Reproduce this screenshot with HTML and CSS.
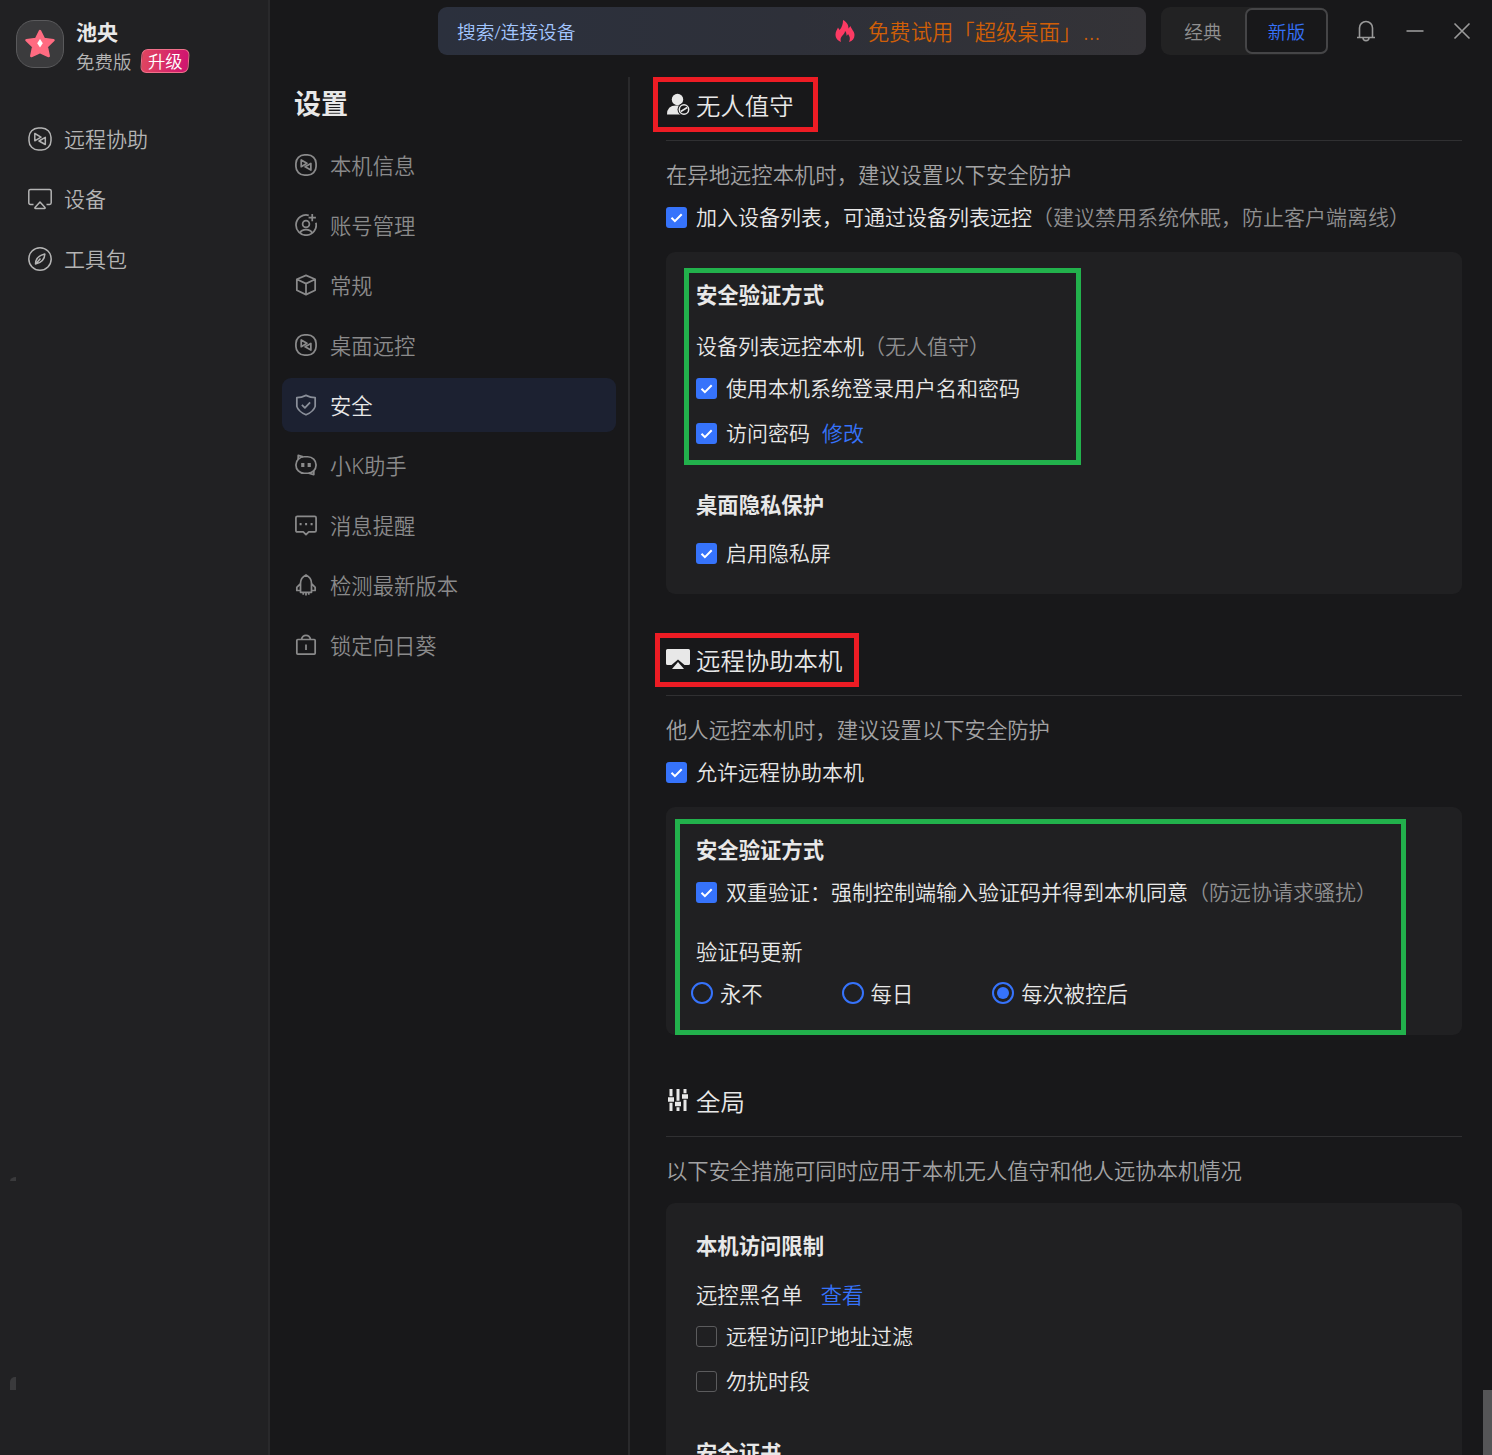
FILE: index.html
```
<!DOCTYPE html>
<html lang="zh-CN">
  <head>
    <meta charset="UTF-8" />
    <meta name="viewport" content="width=device-width, initial-scale=1.0" />
    <link rel="stylesheet" href="styles.css">
    <title>设置</title>
  </head>
  <body>
    <!-- shared icon shapes -->
    <svg class="defs" width="0" height="0">
      <symbol id="remote" viewBox="0 0 24 24">
        <rect x="1" y="1" width="22" height="22" rx="9.300" />
        <path d="M6.800 6.500v7.300l6.200-3.600ZM17.300 10.300v7.200L11 14Z" />
      </symbol>
      <symbol id="tick" viewBox="0 0 21 21">
        <path d="M5.500 10.800l3.400 3.400 6.800-7" />
      </symbol>
    </svg>

    <div class="app">
      <aside class="sidebar">
        <div class="profile">
          <div class="avatar">
            <svg width="32" height="32" viewBox="0 0 32 32">
              <path d="M16 3l4 8 9.500 1.200-6.700 6.500 1.900 9.300L16 24l-8.700 4 1.900-9.300-6.700-6.500L12 11Z" fill="#ff6b81" stroke="#ff6b81" stroke-width="2.500" stroke-linejoin="round" />
              <path d="M16 11l2.800 4.200L16 19.500l-2.800-4.300Z" fill="#fff" />
            </svg>
          </div>
          <div class="profile-info">
            <div class="user-name">池央</div>
            <div class="plan">免费版<span class="badge"><span>升级</span></span></div>
          </div>
        </div>
        <nav class="main-nav">
          <a class="main-link"><svg class="icon-lg"><use href="#remote" /></svg>远程协助</a>
          <a class="main-link">
            <svg class="icon-lg" viewBox="0 0 24 24"><path d="M5.500 17.500H2.500Q.8 17.500.8 15.800V4Q.8 2.500 2.500 2.500h19q1.700 0 1.700 1.500v11.800q0 1.700-1.700 1.700h-3M12 15l5 5.500q.5 1-.5 1h-9q-1 0-.5-1Z" /></svg>设备
          </a>
          <a class="main-link">
            <svg class="icon-lg" viewBox="0 0 24 24"><circle cx="12" cy="12" r="11.200" /><path d="M16.800 7c-6.300 1.500-9.300 4.500-9.300 10 6.300-1.500 9.300-4.500 9.300-10ZM12.500 11.500l-4.500 5" /></svg>工具包
          </a>
        </nav>
        <div class="tray tray-top"></div>
        <div class="tray tray-bottom"></div>
      </aside>

      <div class="main">
        <header class="topbar">
          <div class="search">
            <span class="search-text">搜索/连接设备</span>
            <svg width="20" height="22" viewBox="0 0 20 22"><path d="M6 22C2 20.500.500 17.500.500 14.500c0-3 1.500-4.500 2.500-7l1.500 2.500C7 7.500 8 4 8 0c4 2 5.500 5 5.500 8.500L15.500 6c.5 3 4 5 4 9 0 3.500-2 6-5.500 7 1.500-3 1-5.500-1-8-.5 1.200-1 1.500-1.500 1.800.2-2.300-.5-4-1.500-4.800 0 4-6 5-4 11Z" fill="#fc3a63" /></svg>
            <span class="promo">免费试用「超级桌面」<span class="dots">...</span></span>
          </div>
          <div class="toggle">
            <span class="toggle-item">经典</span>
            <span class="toggle-item active">新版</span>
          </div>
          <div class="window-btns">
            <svg width="20" height="22" viewBox="0 0 20 22"><path d="M1 17.500h18M3.500 17.500V8a6.500 6.500 0 0 1 13 0v9.500M7 18c.3 3.500 5.700 3.500 6 0" /></svg>
            <svg width="18" height="18" viewBox="0 0 18 18"><path d="M.5 9h17" /></svg>
            <svg width="18" height="18" viewBox="0 0 18 18"><path d="M1.500 1.500l15 15M16.500 1.500l-15 15" /></svg>
          </div>
        </header>

        <div class="columns">
          <nav class="settings-nav">
            <h1>设置</h1>
            <a class="item"><svg class="icon"><use href="#remote" /></svg>本机信息</a>
            <a class="item">
              <svg class="icon" viewBox="0 0 24 24"><path d="M15 1.500A11 11 0 1 0 22.800 9.500M18.800 0v8M14.800 4h8M5.500 20.500c2-4.500 11-4.500 13 0" /><circle cx="12" cy="11" r="3.700" /></svg>账号管理
            </a>
            <a class="item">
              <svg class="icon" viewBox="0 0 24 24"><path d="M12 1.500l10 4.200v12L12 22.500l-10-4.800v-12ZM2 5.700l10 4.800 10-4.800M12 10.500v12" /></svg>常规
            </a>
            <a class="item"><svg class="icon"><use href="#remote" /></svg>桌面远控</a>
            <a class="item selected">
              <svg class="icon" viewBox="0 0 24 24"><path d="M12 1.500Q17 4 22 4v9.500Q20.500 19 12 22.700 3.500 19 2 13.500V4q5 0 10-2.500ZM7.500 11.800l3.300 3.300 5.700-5.900" /></svg>安全
            </a>
            <a class="item">
              <svg class="icon" viewBox="0 0 24 24"><rect x="1" y="3" width="22" height="18" rx="9" /><path d="M3.500 6V1.500L9 3M15 21l5.500 1.500V18" /><path d="M8.500 9.800v4.400M15.500 9.800v4.400" stroke-width="3.500" /></svg>小K助手
            </a>
            <a class="item">
              <svg class="icon" viewBox="0 0 24 24"><path d="M2.500 2.500h19q1.500 0 1.500 1.500v14q0 1.500-1.500 1.500h-6.500l-3 3-3-3H2.500Q1 19.500 1 18V4q0-1.500 1.500-1.500Z" /><path d="M5 11h2.200M11 11h2.200M17 11h2.200" stroke-width="2.500" /></svg>消息提醒
            </a>
            <a class="item">
              <svg class="icon" viewBox="0 0 24 24"><path d="M6 20h12V10q0-6-6-9-6 3-6 9ZM6 10.500l-4 4V18h4M18 10.500l4 4V18h-4M9 20.500v2M12 20.500v3M15 20.500v2" /></svg>检测最新版本
            </a>
            <a class="item">
              <svg class="icon" viewBox="0 0 24 24"><path d="M3 6h18q1 0 1 1v14q0 1-1 1H3q-1 0-1-1V7q0-1 1-1ZM7 6q1-4.500 5-4.500T17 6M12 11.500v6" /></svg>锁定向日葵
            </a>
          </nav>

          <main class="content">
            <section class="section">
              <div class="section-title">
                <svg width="24" height="24" viewBox="0 0 24 24"><circle cx="11.500" cy="6.500" r="5.700" fill="#e8e8e8" /><path d="M1 21.500q0-9 9-9h7v9Z" fill="#e8e8e8" /><circle cx="18" cy="16.500" r="6.500" fill="#18181a" /><circle cx="18" cy="16.500" r="4.700" fill="none" stroke="#e8e8e8" stroke-width="1.500" /><path d="M14.800 18.500l6.400-4" stroke="#e8e8e8" stroke-width="1.500" /></svg>
                <h2>无人值守</h2>
                <div class="mark mark-red-1"></div>
              </div>
              <p class="desc">在异地远控本机时，建议设置以下安全防护</p>
              <label class="row"><svg class="check on"><use href="#tick" /></svg>加入设备列表，可通过设备列表远控<span class="hint">（建议禁用系统休眠，防止客户端离线）</span></label>
              <div class="card">
                <h3>安全验证方式</h3>
                <div class="row gap-9">设备列表远控本机<span class="hint">（无人值守）</span></div>
                <label class="row"><svg class="check on"><use href="#tick" /></svg>使用本机系统登录用户名和密码</label>
                <label class="row gap-3"><svg class="check on"><use href="#tick" /></svg>访问密码<a class="link">修改</a></label>
                <h3 class="gap-30">桌面隐私保护</h3>
                <label class="row gap-6"><svg class="check on"><use href="#tick" /></svg>启用隐私屏</label>
                <div class="mark mark-green-1"></div>
              </div>
            </section>

            <section class="section">
              <div class="section-title">
                <svg width="24" height="24" viewBox="0 0 24 24"><path d="M1.500 1h21q1.500 0 1.500 1.500v13q0 1.500-1.500 1.500h-4L12 11.500 5.500 17h-4Q0 17 0 15.500v-13Q0 1 1.500 1Z" fill="#e8e8e8" /><path d="M12 14l6 7H6Z" fill="#e8e8e8" /></svg>
                <h2>远程协助本机</h2>
                <div class="mark mark-red-2"></div>
              </div>
              <p class="desc">他人远控本机时，建议设置以下安全防护</p>
              <label class="row"><svg class="check on"><use href="#tick" /></svg>允许远程协助本机</label>
              <div class="card card-remote">
                <h3>安全验证方式</h3>
                <label class="row"><svg class="check on"><use href="#tick" /></svg>双重验证：强制控制端输入验证码并得到本机同意<span class="hint">（防远协请求骚扰）</span></label>
                <div class="row sub gap-17">验证码更新</div>
                <div class="radios">
                  <label class="radio"><span class="dot"></span>永不</label>
                  <label class="radio"><span class="dot"></span>每日</label>
                  <label class="radio"><span class="dot on"></span>每次被控后</label>
                </div>
                <div class="mark mark-green-2"></div>
              </div>
            </section>

            <section class="section">
              <div class="section-title">
                <svg width="24" height="24" viewBox="0 0 24 24" stroke="#e8e8e8"><path d="M5 0v22M12 0v22M19 0v22" stroke-width="3" /><path d="M1 10.500h8M8 15h8M15 7.500h8" stroke="#18181a" stroke-width="6.500" /><path d="M2 10.500h6M9 15h6M16 7.500h6" stroke-width="4.500" /></svg>
                <h2>全局</h2>
              </div>
              <p class="desc">以下安全措施可同时应用于本机无人值守和他人远协本机情况</p>
              <div class="card card-global">
                <h3>本机访问限制</h3>
                <div class="row sub gap-6">远控黑名单<a class="link link-wide">查看</a></div>
                <label class="row"><span class="check"></span>远程访问IP地址过滤</label>
                <label class="row gap-3"><span class="check"></span>勿扰时段</label>
                <h3 class="gap-30">安全证书</h3>
              </div>
            </section>
          </main>
        </div>
      </div>
      <div class="scrollbar"></div>
    </div>
  </body>
</html>
```

FILE: styles.css
```
* {
  box-sizing: border-box;
}

body {
  margin: 0;
  background-color: #18181a;
  color: #e8e8e8;
  font-family: "Noto Sans", "Noto Sans CJK SC", sans-serif;
  font-size: 21px;
  font-weight: 350;
  overflow: hidden;
}

h1,
h2,
h3,
p {
  margin: 0;
}

svg {
  flex: none;
}

.defs {
  position: absolute;
}

.app {
  position: relative;
  display: flex;
  height: 1455px;
  overflow: hidden;
}

/* left sidebar */
.sidebar {
  position: relative;
  flex: none;
  width: 270px;
  padding: 20px 0 0 16px;
  background-color: #212123;
  border-right: 2px solid #29292b;
}

.profile {
  display: flex;
  gap: 12px;
  height: 89px;
}

.avatar {
  display: flex;
  align-items: center;
  justify-content: center;
  width: 48px;
  height: 48px;
  border: 1px solid #5a5a5c;
  border-radius: 18px;
  background-color: #3b3b3d;
}

.user-name {
  height: 26px;
  line-height: 25px;
  font-weight: 700;
}

.plan {
  display: flex;
  align-items: center;
  height: 30px;
  font-size: 18.5px;
  color: #b4b4b4;
}

.badge {
  display: flex;
  align-items: center;
  justify-content: center;
  width: 48px;
  height: 24px;
  margin-left: 9px;
  padding-bottom: 2px;
  border: 1px solid #f0708a;
  border-radius: 6px;
  background: linear-gradient(90deg, #e04560, #d01470);
  color: #fff;
  font-size: 17.300px;
  transform: skewX(-4deg);
}

.badge span {
  transform: skewX(4deg);
}

.main-link {
  display: flex;
  align-items: center;
  gap: 12px;
  height: 60px;
  padding: 0 0 2px 12px;
  color: #b4b4b4;
}

.icon-lg,
.icon,
.window-btns svg {
  fill: none;
  stroke: currentColor;
  stroke-linejoin: round;
}

.icon-lg {
  width: 24px;
  height: 24px;
  margin-top: 2px;
  stroke-width: 1.500px;
}

.tray {
  position: absolute;
  left: 10px;
  width: 6px;
  background-color: #3a3a3c;
}

.tray-top {
  top: 1177px;
  height: 4px;
  border-top-left-radius: 6px 4px;
}

.tray-bottom {
  top: 1377px;
  height: 13px;
  border-top-left-radius: 5px;
}

/* top bar */
.main {
  flex: 1;
  min-width: 0;
}

.topbar {
  display: flex;
  height: 77px;
  padding: 7px 0 0 168px;
}

.search {
  display: flex;
  align-items: center;
  width: 708px;
  height: 48px;
  padding: 0 46px 0 19px;
  border-radius: 9px;
  background: linear-gradient(90deg, #2b303d, #2e3039 50%, #343337);
}

.search-text {
  flex: 1;
  padding-bottom: 2px;
  font-size: 18.670px;
  color: #a3c6ff;
}

.promo {
  width: 232px;
  margin-left: 13px;
  padding-bottom: 2px;
  font-size: 21.330px;
  color: #d05f07;
  white-space: nowrap;
}

.dots {
  margin-left: 2px;
  letter-spacing: 0.500px;
}

.toggle {
  display: flex;
  align-items: center;
  width: 167px;
  height: 48px;
  margin-left: 15px;
  border-radius: 9px;
  background-color: #222223;
  font-size: 18.670px;
}

.toggle-item {
  display: flex;
  align-items: center;
  justify-content: center;
  width: 84px;
  height: 46px;
  padding-bottom: 2px;
  color: #909090;
}

.toggle-item.active {
  width: 83px;
  border: 2px solid #454547;
  border-radius: 7px;
  background-color: #18181a;
  color: #3672fa;
}

.window-btns {
  display: flex;
  align-items: center;
  gap: 29.500px;
  height: 48px;
  margin-left: 28px;
  color: #9a9a9a;
  stroke-width: 1.600px;
}

/* settings menu */
.columns {
  display: flex;
  height: 1378px;
}

.settings-nav {
  flex: none;
  width: 360px;
  padding: 0 12px;
  border-right: 2px solid #29292b;
}

h1 {
  height: 61px;
  padding-left: 12px;
  font-size: 27px;
  line-height: 54px;
}

.item {
  display: flex;
  align-items: center;
  gap: 13px;
  height: 54px;
  margin-bottom: 6px;
  padding: 0 0 2px 13px;
  border-radius: 9px;
  font-size: 21.330px;
  color: #8a8a8b;
}

.icon {
  width: 22px;
  height: 22px;
  margin-top: 2px;
  stroke-width: 1.900px;
}

.item.selected {
  background-color: #1c2131;
  color: #e8e8e8;
}

.selected .icon {
  color: #8a8f99;
}

/* content */
.content {
  flex: 1;
  margin-top: -7px;
  padding: 0 30px 0 36px;
}

.section {
  margin-bottom: 31px;
}

.section-title {
  position: relative;
  display: flex;
  align-items: center;
  gap: 6px;
  height: 71px;
  border-bottom: 1px solid #303032;
}

h2 {
  padding-bottom: 2px;
  font-size: 24.400px;
  font-weight: 350;
}

.desc {
  margin-top: 13px;
  font-size: 21.330px;
  line-height: 42px;
  color: #a3a3a4;
}

.row {
  display: flex;
  align-items: center;
  height: 42px;
  padding-bottom: 2px;
  white-space: nowrap;
}

.sub {
  font-size: 21.330px;
}

.hint {
  color: #8f8f90;
}

.check {
  width: 21px;
  height: 21px;
  margin: 2px 9px 0 0;
  border: 1px solid #5b5b5d;
  border-radius: 3px;
}

.check.on {
  border: none;
  background-color: #3673fb;
  fill: none;
  stroke: #fff;
  stroke-width: 2px;
}

.link {
  margin-left: 12px;
  color: #3673fb;
}

.link-wide {
  margin-left: 18px;
}

.card {
  position: relative;
  height: 342px;
  margin-top: 14px;
  padding: 22px 30px 0;
  border-radius: 9px;
  background-color: #202022;
}

.card-remote {
  height: 228px;
}

.card-global {
  height: 300px;
  margin-top: 11px;
}

h3 {
  font-size: 21.330px;
  line-height: 42px;
}

.gap-3 {
  margin-top: 3px;
}

.gap-6 {
  margin-top: 6px;
}

.gap-9 {
  margin-top: 9px;
}

.gap-17 {
  margin-top: 17px;
}

.gap-30 {
  margin-top: 30px;
}

.radios {
  display: flex;
  margin-left: -5px;
}

.radio {
  display: flex;
  align-items: center;
  width: 150.600px;
  height: 42px;
  padding-bottom: 2px;
  font-size: 21.330px;
  white-space: nowrap;
}

.dot {
  flex: none;
  width: 22px;
  height: 22px;
  margin: 2px 7px 0 0;
  border: 2px solid #3673fb;
  border-radius: 50%;
}

.dot.on {
  padding: 3px;
  background-color: #3673fb;
  background-clip: content-box;
}

/* highlight frames drawn over the page */
.mark {
  position: absolute;
  border: 5px solid #ed1c24;
}

.mark-red-1 {
  left: -13px;
  top: 7px;
  width: 165px;
  height: 55px;
}

.mark-red-2 {
  left: -11px;
  top: 8px;
  width: 204px;
  height: 54px;
}

.mark-green-1 {
  left: 18px;
  top: 16px;
  width: 397px;
  height: 197px;
  border-color: #22b14c;
}

.mark-green-2 {
  left: 9px;
  top: 12px;
  width: 731px;
  height: 216px;
  border-color: #22b14c;
}

.scrollbar {
  position: absolute;
  right: 0;
  bottom: 0;
  width: 9px;
  height: 65px;
  background-color: #555557;
}
```
